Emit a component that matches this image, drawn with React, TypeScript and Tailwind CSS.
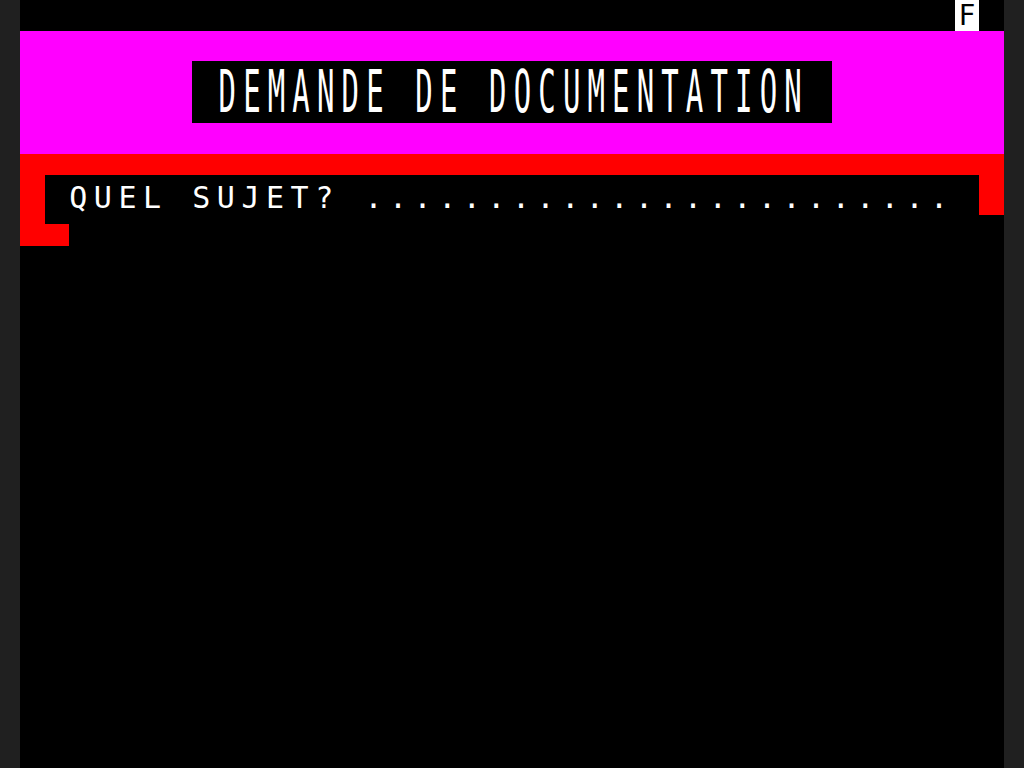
const mono = { fontFamily: '"DejaVu Sans Mono", "Liberation Mono", monospace' }

// one character per 24.6px cell, like the 40-column grid
function Cells({ text }: { text: string }) {
  return (
    <div className="flex">
      {text.split('').map((ch, i) => (
        <span key={i} className="w-[24.6px] shrink-0 whitespace-pre text-center">
          {ch}
        </span>
      ))}
    </div>
  )
}

export default function App() {
  return (
    <div className="flex h-[768px] w-[1024px] bg-[#202020]">
      <div className="ml-[20px] flex h-full w-[984px] flex-col bg-black" style={mono}>
        {/* status row */}
        <div className="flex h-[31px] justify-end">
          <div className="mr-[25px] flex w-[24px] items-center justify-center bg-white text-[28px] leading-none text-black">
            F
          </div>
        </div>

        {/* title band */}
        <div className="flex h-[123px] flex-col bg-[#ff00ff] pt-[30px]">
          <div className="ml-[172px] flex h-[62px] w-[640px] items-center bg-black pl-[23px]">
            <div className="origin-center scale-y-200 text-[29px] leading-none text-white">
              <Cells text="DEMANDE DE DOCUMENTATION" />
            </div>
          </div>
        </div>

        {/* red frame */}
        <div className="h-[21px] bg-[#ff0000]" />
        <div className="flex h-[40px]">
          <div className="w-[25px] bg-[#ff0000]" />
          <div className="flex flex-1 items-center pl-[21px] pt-[6px] text-[30px] leading-none text-white">
            <Cells text={'QUEL SUJET? ' + '.'.repeat(24)} />
          </div>
          <div className="w-[25px] bg-[#ff0000]" />
        </div>
        <div className="h-[9px] w-[25px] bg-[#ff0000]" />
        <div className="h-[22px] w-[49px] bg-[#ff0000]" />
      </div>
    </div>
  )
}
